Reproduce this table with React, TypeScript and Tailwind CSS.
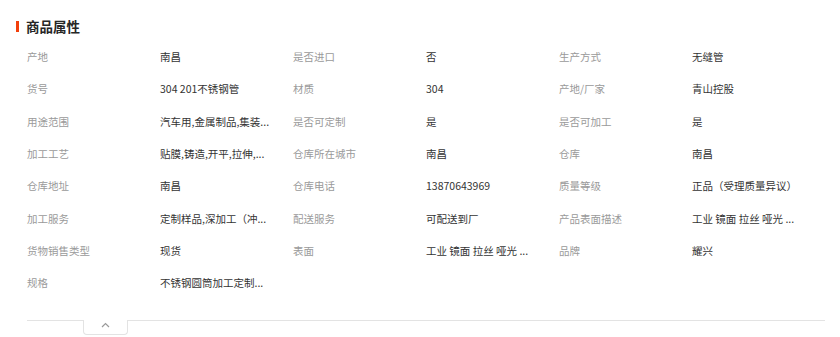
import React from "react";

const rows: [string, string][][] = [
  [["产地", "南昌"], ["是否进口", "否"], ["生产方式", "无缝管"]],
  [["货号", "304 201不锈钢管"], ["材质", "304"], ["产地/厂家", "青山控股"]],
  [["用途范围", "汽车用,金属制品,集装..."], ["是否可定制", "是"], ["是否可加工", "是"]],
  [["加工工艺", "贴膜,铸造,开平,拉伸,..."], ["仓库所在城市", "南昌"], ["仓库", "南昌"]],
  [["仓库地址", "南昌"], ["仓库电话", "13870643969"], ["质量等级", "正品（受理质量异议）"]],
  [["加工服务", "定制样品,深加工（冲..."], ["配送服务", "可配送到厂"], ["产品表面描述", "工业 镜面 拉丝 哑光 ..."]],
  [["货物销售类型", "现货"], ["表面", "工业 镜面 拉丝 哑光 ..."], ["品牌", "耀兴"]],
  [["规格", "不锈钢圆筒加工定制..."]],
];

export default function App() {
  return (
    <div
      className="w-[840px] h-[337px] bg-white overflow-hidden"
      style={{ fontFamily: '"Noto Sans CJK SC", "Noto Sans", sans-serif' }}
    >
      <div className="pt-[16px] pl-[16px] h-[20px] box-content flex items-center">
        <div className="w-[3px] h-[11px] bg-[#f2400c]" />
        <div className="ml-[7px] text-[13.5px] font-bold text-[#262626] leading-[20px]">商品属性</div>
      </div>
      <div className="mt-[5px] ml-[27px] w-[798px]">
        {rows.map((row, i) => (
          <div key={i} className="grid grid-cols-6 h-[32.3px] items-center text-[10.5px] leading-[14px]">
            {row.map(([k, v], j) => (
              <React.Fragment key={j}>
                <div className="text-[#9a9a9a] whitespace-nowrap">{k}</div>
                <div className="text-[#333] whitespace-nowrap">{v}</div>
              </React.Fragment>
            ))}
          </div>
        ))}
      </div>
      <div className="mt-[21px] ml-[27px] w-[798px] flex items-start">
        <div className="w-[56px] border-t border-[#e3e3e3]" />
        <div className="w-[45px] h-[15px] border-x border-b border-[#e3e3e3] rounded-b-[4px] flex justify-center pt-[1px]">
          <svg width="9" height="6" viewBox="0 0 9 6" className="mt-[1px]">
            <path d="M1 5 L4.5 1.5 L8 5" fill="none" stroke="#9a9a9a" strokeWidth="1.2" />
          </svg>
        </div>
        <div className="flex-1 border-t border-[#e3e3e3]" />
      </div>
    </div>
  );
}
